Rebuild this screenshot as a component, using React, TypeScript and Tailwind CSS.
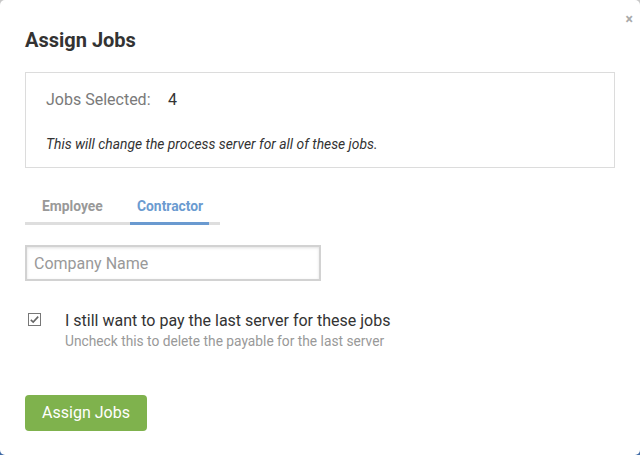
import React from "react";

export default function App() {
  return (
    <div className="w-[640px] h-[455px] bg-gradient-to-b from-[#c8c8c8] to-[#3f6aa6] overflow-hidden" style={{ fontFamily: "Roboto, 'Liberation Sans', sans-serif" }}>
      <div className="relative w-[640px] h-[455px] bg-white rounded-[5px] px-[25px] pt-[29px]">
        <button className="absolute right-[7px] top-[12px] text-[#aaa] text-[14px] font-bold leading-none">×</button>
        <h2 className="text-[20px] font-bold text-[#333] leading-[22px]">Assign Jobs</h2>
        <div className="mt-[21px] border border-[#dcdcdc] h-[96px] px-[20px] pt-[17px]">
          <div className="flex items-center text-[16px] leading-[20px]">
            <span className="text-[#7a7a7a] w-[122px]">Jobs Selected:</span>
            <span className="text-[#333]">4</span>
          </div>
          <p className="mt-[26px] italic text-[13.85px] text-[#333] leading-[17px]">This will change the process server for all of these jobs.</p>
        </div>
        <div className="mt-[30px] w-[195px] relative">
          <div className="flex text-[13.85px] font-bold leading-[17px]">
            <div className="w-[105px] pl-[17px] pb-[7px] text-[#999]">Employee</div>
            <div className="w-[79px] pl-[7px] pb-[7px] text-[#6b9bd0]">Contractor</div>
          </div>
          <div className="h-[3px] bg-[#dedede] flex">
            <div className="w-[105px]" />
            <div className="w-[79px] bg-[#6a9ad0]" />
          </div>
        </div>
        <input
          placeholder="Company Name"
          className="mt-[20px] block w-[296px] h-[36px] border-2 border-[#d2d2d2] shadow-[inset_0_1px_3px_rgba(0,0,0,0.12)] px-[7px] text-[16px] text-[#333] placeholder:text-[#999] outline-none"
        />
        <div className="mt-[30px] flex">
          <div className="w-[40px] pt-[2px] pl-[3px]">
            <div className="w-[13px] h-[13px] border border-[#777] flex items-center justify-center bg-white">
              <svg width="11" height="11" viewBox="0 0 11 11"><path d="M1.8 5.8 L4.2 8 L9.2 2.6" stroke="#666" strokeWidth="1.6" fill="none" /></svg>
            </div>
          </div>
          <div>
            <div className="text-[16px] text-[#333] leading-[19px]">I still want to pay the last server for these jobs</div>
            <div className="text-[13.75px] text-[#999] leading-[17px] mt-[3px]">Uncheck this to delete the payable for the last server</div>
          </div>
        </div>
        <button className="mt-[45px] w-[122px] h-[36px] rounded-[4px] bg-[#7fb24d] text-white text-[16px]">Assign Jobs</button>
      </div>
    </div>
  );
}
